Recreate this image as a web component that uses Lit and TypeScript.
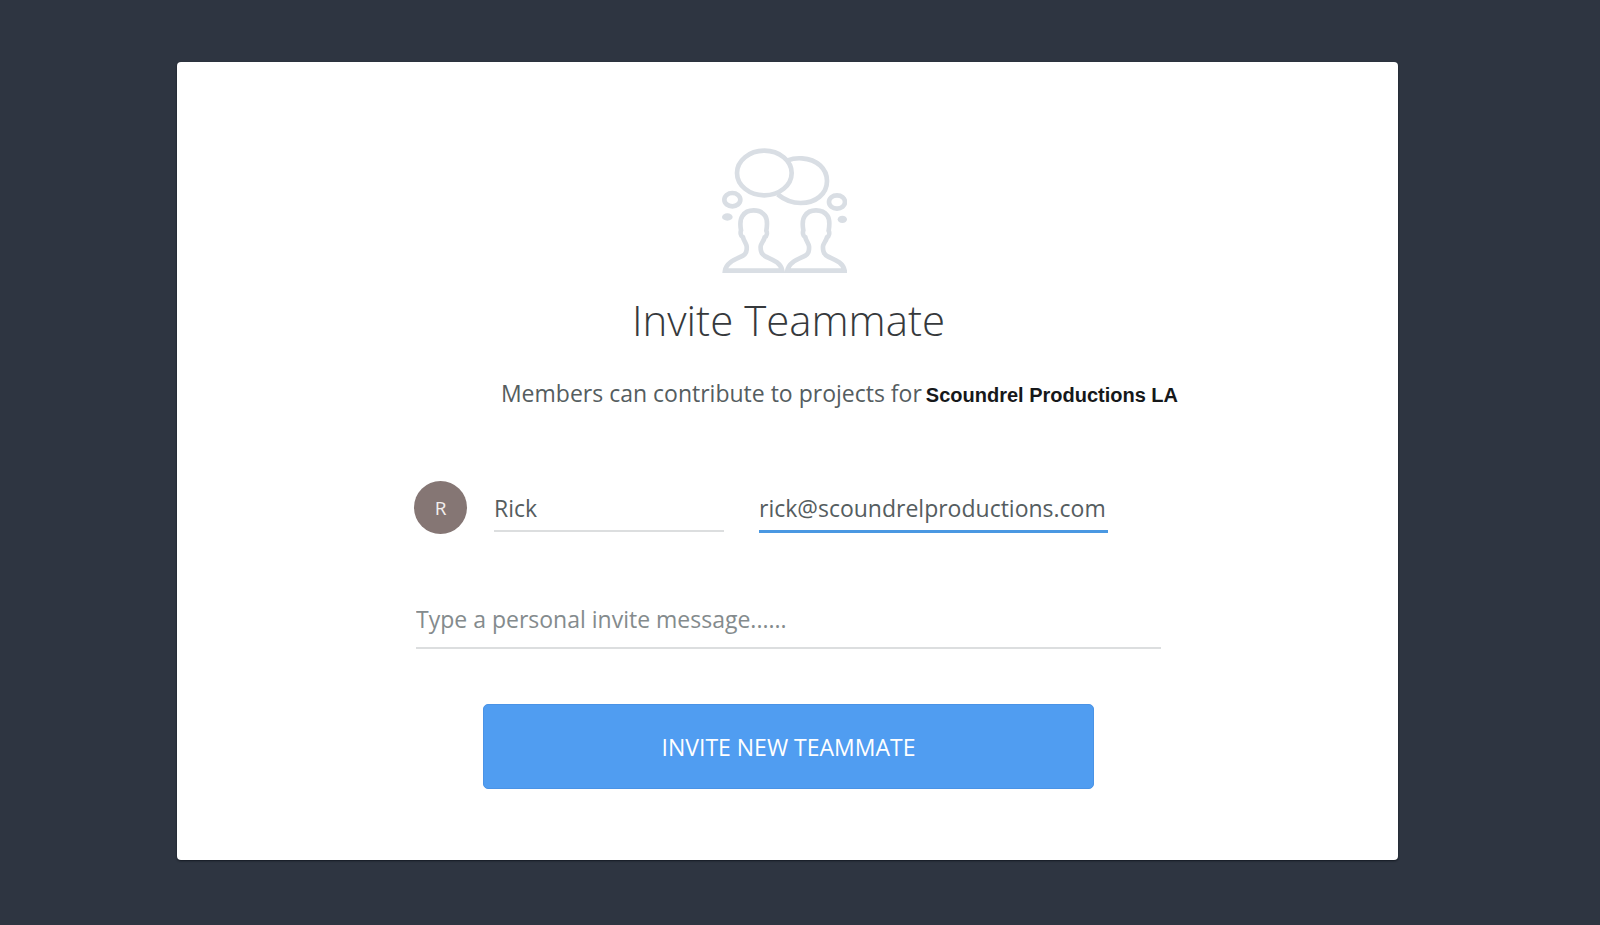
import { LitElement, html, css } from "lit";
import { customElement, state } from "lit/decorators.js";

@customElement("app-root")
export class AppRoot extends LitElement {
  @state() private name = "Rick";
  @state() private email = "rick@scoundrelproductions.com";

  static styles = css`
    :host {
      display: block;
      box-sizing: border-box;
      min-height: 100vh;
      padding: 62px 202px 65px 177px;
      background: #2e3541;
      font-family: "Open Sans", "Noto Sans", sans-serif;
      font-size: 23px;
      line-height: 32px;
      color: #555d60;
    }
    .card {
      box-sizing: border-box;
      display: flex;
      flex-direction: column;
      align-items: center;
      padding: 86px 24px 71px 26px;
      background: #fff;
      border-radius: 4px;
      box-shadow: 0 1px 2px rgba(8, 14, 22, 0.7);
    }
    .art {
      display: block;
      width: 125px;
      height: 125px;
      margin-right: 8px;
    }
    h1 {
      margin: 17px 0 27px;
      font-size: 42px;
      line-height: 60px;
      font-weight: 300;
      color: #36393c;
    }
    .note {
      margin: 0;
      padding-left: 102px;
    }
    .note strong {
      margin-left: -2px;
      font-family: "Liberation Sans", Arial, sans-serif;
      font-size: 20px;
      color: #16181a;
    }
    form {
      display: flex;
      flex-direction: column;
      align-items: center;
      width: 100%;
      max-width: 745px;
      margin-top: 70px;
    }
    .person {
      display: flex;
      align-items: flex-start;
      align-self: stretch;
      margin-left: -2px;
    }
    .avatar {
      display: grid;
      place-items: center;
      width: 53px;
      height: 53px;
      margin-right: 27px;
      border-radius: 50%;
      background: #857674;
      color: #f2efee;
      font-size: 19px;
    }
    input {
      box-sizing: border-box;
      display: block;
      min-width: 0;
      margin: 0;
      padding: 0;
      border: 0;
      border-bottom: 2px solid #dcdedf;
      border-radius: 0;
      outline: 0;
      background: none;
      font: inherit;
      color: inherit;
    }
    input::placeholder {
      color: #848b8d;
      opacity: 1;
    }
    .name {
      width: 230px;
      height: 51px;
      margin-right: 35px;
      padding-top: 4px;
    }
    .email {
      width: 349px;
      height: 52px;
      padding-top: 4px;
      border-bottom: 3px solid #4a98e2;
    }
    .message {
      width: 100%;
      height: 57px;
      margin-top: 58px;
      padding-bottom: 2px;
    }
    button {
      width: 82%;
      height: 85px;
      margin-top: 55px;
      padding: 0;
      border: 1px solid #4a93e6;
      border-radius: 5px;
      background: #509df1;
      color: #fff;
      font: inherit;
      cursor: pointer;
    }
  `;

  render() {
    return html`
      <main class="card">
        <svg
          class="art"
          viewBox="36 23 375 375"
          fill="none"
          stroke="#d9dee4"
          stroke-width="14"
          aria-hidden="true"
        >
          <ellipse cx="163" cy="98" rx="82" ry="67" />
          <path d="M233 60C248 54 262 53 276 54C322 57 351 86 351 122C351 161 317 188 272 188C246 188 225 180 203 162" />
          <ellipse cx="67" cy="178" rx="24" ry="20" />
          <ellipse cx="381" cy="185" rx="24" ry="20" />
          <ellipse cx="52" cy="230" rx="16" ry="11" fill="#d9dee4" stroke="none" />
          <ellipse cx="397" cy="237" rx="14" ry="11" fill="#d9dee4" stroke="none" />
          <path
            d="M45 391C49 364 82 355 99 346C110 340 111 329 110 318C109 309 102 303 99 291C91 286 91 276 93 270C89 247 91 235 98 226C105 215 118 210 131 210C145 210 158 216 165 226C173 237 172 253 169 271C172 277 171 287 164 291C161 303 153 309 152 318C151 333 154 342 166 348C184 357 212 365 217 391Z"
          />
          <path
            d="M232 391C236 364 269 355 286 346C297 340 298 329 297 318C296 309 289 303 286 291C278 286 278 276 280 270C276 247 278 235 285 226C292 215 305 210 318 210C332 210 345 216 352 226C360 237 359 253 356 271C359 277 358 287 351 291C348 303 340 309 339 318C338 333 341 342 353 348C371 357 399 365 404 391Z"
          />
        </svg>
        <h1>Invite Teammate</h1>
        <p class="note">
          Members can contribute to projects for
          <strong>Scoundrel Productions LA</strong>
        </p>
        <form @submit=${(e: Event) => e.preventDefault()}>
          <div class="person">
            <span class="avatar" aria-hidden="true">${this.name.charAt(0)}</span>
            <input
              class="name"
              type="text"
              aria-label="Name"
              .value=${this.name}
              @input=${(e: Event) => (this.name = (e.target as HTMLInputElement).value)}
            />
            <input
              class="email"
              type="email"
              aria-label="Email"
              .value=${this.email}
              @input=${(e: Event) => (this.email = (e.target as HTMLInputElement).value)}
            />
          </div>
          <input
            class="message"
            type="text"
            aria-label="Personal message"
            placeholder="Type a personal invite message......"
          />
          <button type="submit">INVITE NEW TEAMMATE</button>
        </form>
      </main>
    `;
  }
}
